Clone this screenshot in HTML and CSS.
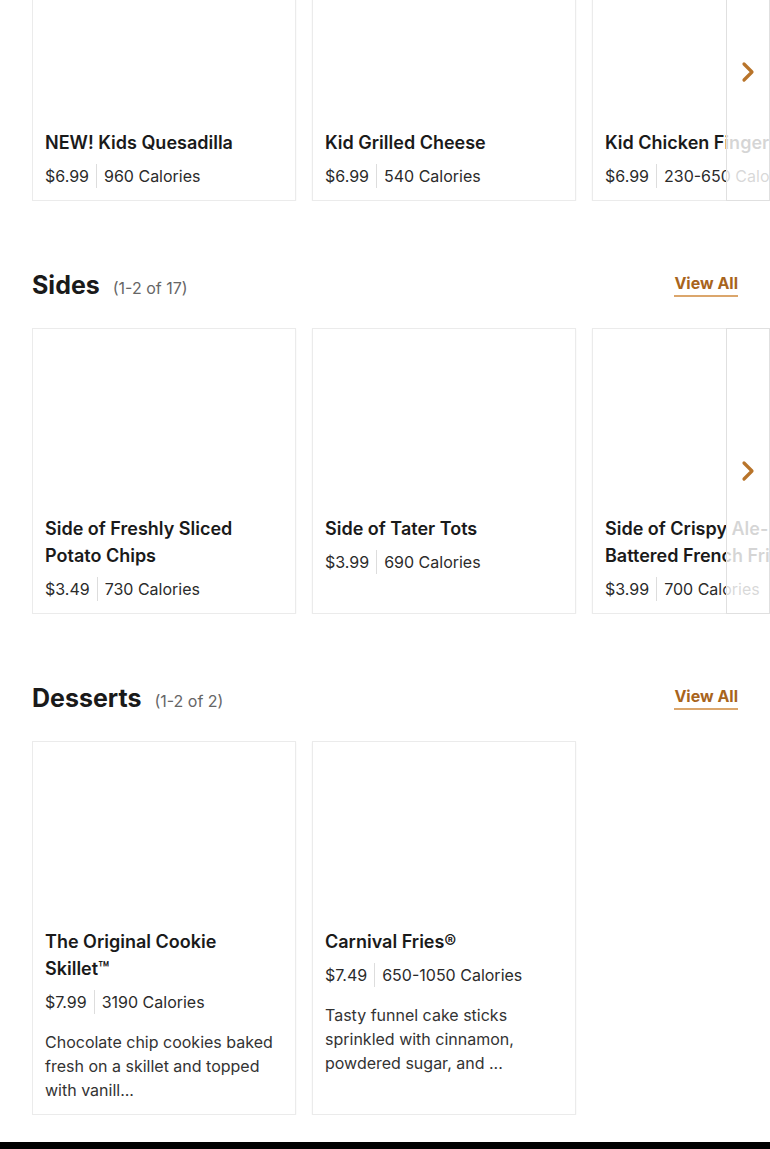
FILE: index.html
```html
<!DOCTYPE html>
<html>
<head>
  <title>Menu</title>
  <link rel="stylesheet" href="styles.css">
</head>
<body>
  <main class="menu">
    <!-- Kids (heading scrolled out of view) -->
    <section class="category category-first">
      <div class="carousel">
        <div class="track">
          <article class="card">
            <div class="card-image"></div>
            <div class="card-body">
              <h3 class="card-title">NEW! Kids Quesadilla</h3>
              <div class="card-meta"><span class="price">$6.99</span><span class="calories">960 Calories</span></div>
            </div>
          </article>
          <article class="card">
            <div class="card-image"></div>
            <div class="card-body">
              <h3 class="card-title">Kid Grilled Cheese</h3>
              <div class="card-meta"><span class="price">$6.99</span><span class="calories">540 Calories</span></div>
            </div>
          </article>
          <article class="card">
            <div class="card-image"></div>
            <div class="card-body">
              <h3 class="card-title">Kid Chicken Fingers</h3>
              <div class="card-meta"><span class="price">$6.99</span><span class="calories">230-650 Calories</span></div>
            </div>
          </article>
        </div>
        <button class="next" aria-label="Next">
          <svg width="16" height="22" viewBox="0 0 16 22"><path d="M4 3 L12 11 L4 19" fill="none" stroke="#b8742a" stroke-width="3.2" stroke-linecap="round" stroke-linejoin="round"/></svg>
        </button>
      </div>
    </section>

    <section class="category">
      <div class="category-header">
        <h2 class="category-title">Sides <span class="count">(1-2 of 17)</span></h2>
        <a class="view-all" href="#">View All</a>
      </div>
      <div class="carousel">
        <div class="track">
          <article class="card">
            <div class="card-image"></div>
            <div class="card-body">
              <h3 class="card-title">Side of Freshly Sliced Potato Chips</h3>
              <div class="card-meta"><span class="price">$3.49</span><span class="calories">730 Calories</span></div>
            </div>
          </article>
          <article class="card">
            <div class="card-image"></div>
            <div class="card-body">
              <h3 class="card-title">Side of Tater Tots</h3>
              <div class="card-meta"><span class="price">$3.99</span><span class="calories">690 Calories</span></div>
            </div>
          </article>
          <article class="card">
            <div class="card-image"></div>
            <div class="card-body">
              <h3 class="card-title">Side of Crispy Ale-Battered French Fries</h3>
              <div class="card-meta"><span class="price">$3.99</span><span class="calories">700 Calories</span></div>
            </div>
          </article>
        </div>
        <button class="next" aria-label="Next">
          <svg width="16" height="22" viewBox="0 0 16 22"><path d="M4 3 L12 11 L4 19" fill="none" stroke="#b8742a" stroke-width="3.2" stroke-linecap="round" stroke-linejoin="round"/></svg>
        </button>
      </div>
    </section>

    <section class="category">
      <div class="category-header">
        <h2 class="category-title">Desserts <span class="count">(1-2 of 2)</span></h2>
        <a class="view-all" href="#">View All</a>
      </div>
      <div class="carousel">
        <div class="track">
          <article class="card">
            <div class="card-image"></div>
            <div class="card-body">
              <h3 class="card-title">The Original Cookie Skillet™</h3>
              <div class="card-meta"><span class="price">$7.99</span><span class="calories">3190 Calories</span></div>
              <p class="card-desc">Chocolate chip cookies baked fresh on a skillet and topped with vanill...</p>
            </div>
          </article>
          <article class="card">
            <div class="card-image"></div>
            <div class="card-body">
              <h3 class="card-title">Carnival Fries®</h3>
              <div class="card-meta"><span class="price">$7.49</span><span class="calories">650-1050 Calories</span></div>
              <p class="card-desc">Tasty funnel cake sticks sprinkled with cinnamon, powdered sugar, and ...</p>
            </div>
          </article>
        </div>
      </div>
    </section>
  </main>

  <footer class="footer"></footer>
</body>
</html>
```

FILE: styles.css
```css
body {
  font-family: Inter, "Noto Sans", Arial, sans-serif;
  background-color: #ffffff;
  color: #1a1a1a;
  margin: 0;
  padding: 0;
  overflow: hidden;
}

.menu {
  padding: 0 32px;
}

.category {
  padding-top: 68px;
}

.category-first {
  padding-top: 0;
  margin-top: -58px;
}

.category-header {
  display: flex;
  align-items: center;
  justify-content: space-between;
  height: 32px;
  margin-bottom: 27px;
}

.category-title {
  margin: 0;
  font-size: 25px;
  line-height: 32px;
  font-weight: 700;
  color: #1a1a1a;
}

.category-title .count {
  font-size: 16px;
  line-height: 1;
  font-weight: 400;
  color: #666666;
  margin-left: 7px;
}

.view-all {
  font-size: 16px;
  line-height: 20px;
  font-weight: 700;
  color: #a8641c;
  text-decoration: none;
  padding-bottom: 2px;
  border-bottom: 2px solid #dba66c;
}

.carousel {
  position: relative;
  margin-right: -32px;
  overflow: hidden;
}

.track {
  display: flex;
  gap: 16px;
}

.card {
  flex: 0 0 264px;
  box-sizing: border-box;
  display: flex;
  flex-direction: column;
  background-color: #ffffff;
  border: 1px solid #ebebeb;
  box-shadow: 0 1px 2px rgba(0, 0, 0, 0.05);
}

.card-image {
  height: 174px;
  background-color: #ffffff;
}

.card-body {
  padding: 12px;
}

.card-title {
  margin: 0;
  padding-right: 8px;
  font-size: 18px;
  line-height: 27px;
  font-weight: 600;
  color: #1a1a1a;
}

.card-meta {
  display: flex;
  align-items: stretch;
  margin-top: 8px;
  font-size: 16px;
  line-height: 24px;
  color: #2b2b2b;
}

.price {
  padding-right: 7px;
  border-right: 1px solid #dddddd;
}

.calories {
  padding-left: 7px;
}

.card-desc {
  margin: 16px 0 0 0;
  font-size: 16px;
  line-height: 24px;
  color: #333333;
}

.next {
  position: absolute;
  top: 0;
  right: 0;
  bottom: 0;
  width: 44px;
  box-sizing: border-box;
  padding: 0;
  display: flex;
  align-items: center;
  justify-content: center;
  background-color: rgba(255, 255, 255, 0.82);
  border: 1px solid #e0e0e0;
  cursor: pointer;
}

.footer {
  margin-top: 27px;
  height: 120px;
  background-color: #000000;
}
```
